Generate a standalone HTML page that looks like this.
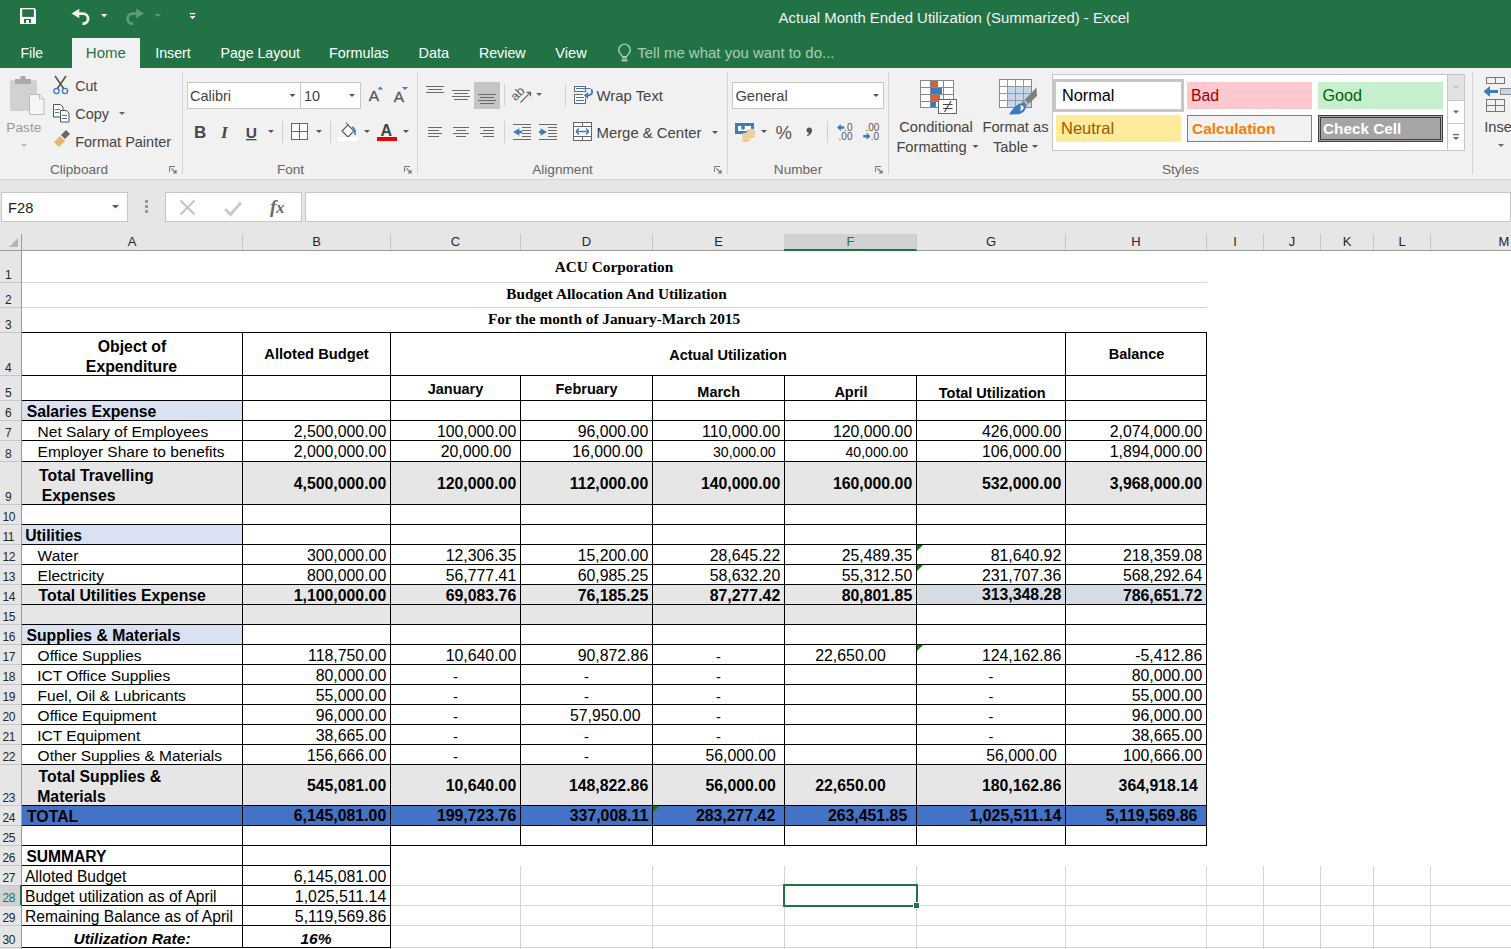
<!DOCTYPE html>
<html><head><meta charset="utf-8">
<style>
*{margin:0;padding:0;box-sizing:border-box}
html,body{width:1511px;height:949px;overflow:hidden;background:#fff;font-family:"Liberation Sans",sans-serif}
.a{position:absolute}
.t{position:absolute;white-space:nowrap}
</style></head><body>
<div class="a" style="left:0px;top:0px;width:1511px;height:68px;background:#217346;"></div><svg class="a" style="left:0;top:0" width="210" height="36">
<path d="M20 8 h14.5 l1.5 1.5 v14.5 h-16 z" fill="#fff"/>
<rect x="22.2" y="9.3" width="11.6" height="7.6" fill="#217346"/>
<rect x="24" y="19" width="7" height="4" fill="#217346"/>
<rect x="26" y="20" width="3" height="3" fill="#fff"/>
<path d="M71.5 13.5 L79.3 8.7 L79.3 18.3 Z" fill="#f2f2f2"/>
<path d="M78 13.6 H83 A5.1 5.1 0 0 1 84 23.7 H82.5" fill="none" stroke="#f2f2f2" stroke-width="2.8"/>
<path d="M101 14 h6.3 l-3.15 3.2 z" fill="#fff"/>
<path d="M144 13.5 L136.2 8.7 L136.2 18.3 Z" fill="#5c9d78"/>
<path d="M137.5 13.6 H132.5 A5.1 5.1 0 0 0 131.5 23.7 H133" fill="none" stroke="#5c9d78" stroke-width="2.8"/>
<path d="M154.7 14 h6.3 l-3.15 3 z" fill="#5c9d78"/>
<rect x="189.8" y="12.9" width="5.4" height="1.4" fill="#fff"/>
<path d="M189.7 15.9 h5.8 l-2.9 3.3 z" fill="#fff"/>
</svg><div class="t" style="left:554px;width:800px;text-align:center;top:9px;font-size:14.93px;line-height:17px;font-weight:normal;font-style:normal;color:#f2f2f2;font-family:'Liberation Sans',sans-serif;">Actual Month Ended Utilization (Summarized) - Excel</div><div class="a" style="left:72px;top:38px;width:68px;height:30px;background:#f1f1f1;"></div><div class="t" style="left:20.5px;top:45px;font-size:14.0px;line-height:16px;font-weight:normal;font-style:normal;color:#fff;font-family:'Liberation Sans',sans-serif;">File</div><div class="t" style="left:85.8px;top:44px;font-size:15.0px;line-height:17px;font-weight:normal;font-style:normal;color:#217346;font-family:'Liberation Sans',sans-serif;">Home</div><div class="t" style="left:155.2px;top:45px;font-size:14.25px;line-height:16px;font-weight:normal;font-style:normal;color:#fff;font-family:'Liberation Sans',sans-serif;">Insert</div><div class="t" style="left:220.5px;top:45px;font-size:14.16px;line-height:16px;font-weight:normal;font-style:normal;color:#fff;font-family:'Liberation Sans',sans-serif;">Page Layout</div><div class="t" style="left:329px;top:45px;font-size:14.35px;line-height:16px;font-weight:normal;font-style:normal;color:#fff;font-family:'Liberation Sans',sans-serif;">Formulas</div><div class="t" style="left:418.5px;top:45px;font-size:14.5px;line-height:16px;font-weight:normal;font-style:normal;color:#fff;font-family:'Liberation Sans',sans-serif;">Data</div><div class="t" style="left:478.9px;top:45px;font-size:14.25px;line-height:16px;font-weight:normal;font-style:normal;color:#fff;font-family:'Liberation Sans',sans-serif;">Review</div><div class="t" style="left:555.3px;top:45px;font-size:14.6px;line-height:16px;font-weight:normal;font-style:normal;color:#fff;font-family:'Liberation Sans',sans-serif;">View</div><svg class="a" style="left:615px;top:42px" width="20" height="22">
<path d="M4.7 10.8 A5.6 5.6 0 1 1 14.3 10.8 L11.3 14.8 H7.7 Z" fill="none" stroke="#a9ccb7" stroke-width="1.4" stroke-linejoin="round"/>
<rect x="7.2" y="14.8" width="4.6" height="1.6" fill="#a9ccb7"/>
<rect x="6.6" y="17.2" width="5.8" height="2.2" fill="#a9ccb7"/>
</svg><div class="t" style="left:637.3px;top:44px;font-size:14.98px;line-height:17px;font-weight:normal;font-style:normal;color:#a9ccb7;font-family:'Liberation Sans',sans-serif;">Tell me what you want to do...</div><div class="a" style="left:0px;top:68px;width:1511px;height:111px;background:#f1f1f1;"></div><div class="a" style="left:0px;top:179px;width:1511px;height:1px;background:#d5d5d5;"></div><div class="a" style="left:182px;top:72px;width:1px;height:102px;background:#d4d4d4;"></div><div class="a" style="left:417px;top:72px;width:1px;height:102px;background:#d4d4d4;"></div><div class="a" style="left:727px;top:72px;width:1px;height:102px;background:#d4d4d4;"></div><div class="a" style="left:888px;top:72px;width:1px;height:102px;background:#d4d4d4;"></div><div class="a" style="left:1472px;top:72px;width:1px;height:102px;background:#d4d4d4;"></div><div class="t" style="left:-321px;width:800px;text-align:center;top:162px;font-size:13.6px;line-height:15px;font-weight:normal;font-style:normal;color:#666;font-family:'Liberation Sans',sans-serif;">Clipboard</div><div class="t" style="left:-109.5px;width:800px;text-align:center;top:162px;font-size:13.6px;line-height:15px;font-weight:normal;font-style:normal;color:#666;font-family:'Liberation Sans',sans-serif;">Font</div><div class="t" style="left:162.5px;width:800px;text-align:center;top:162px;font-size:13.6px;line-height:15px;font-weight:normal;font-style:normal;color:#666;font-family:'Liberation Sans',sans-serif;">Alignment</div><div class="t" style="left:398px;width:800px;text-align:center;top:162px;font-size:13.6px;line-height:15px;font-weight:normal;font-style:normal;color:#666;font-family:'Liberation Sans',sans-serif;">Number</div><div class="t" style="left:780.5px;width:800px;text-align:center;top:162px;font-size:13.6px;line-height:15px;font-weight:normal;font-style:normal;color:#666;font-family:'Liberation Sans',sans-serif;">Styles</div><svg class="a" style="left:169px;top:166px" width="8" height="8">
<path d="M0.5 6 V0.5 H6" fill="none" stroke="#777" stroke-width="1"/>
<path d="M2.5 2.5 L7 7 M7 4 V7 H4" fill="none" stroke="#777" stroke-width="1.2"/>
</svg><svg class="a" style="left:404px;top:166px" width="8" height="8">
<path d="M0.5 6 V0.5 H6" fill="none" stroke="#777" stroke-width="1"/>
<path d="M2.5 2.5 L7 7 M7 4 V7 H4" fill="none" stroke="#777" stroke-width="1.2"/>
</svg><svg class="a" style="left:714px;top:166px" width="8" height="8">
<path d="M0.5 6 V0.5 H6" fill="none" stroke="#777" stroke-width="1"/>
<path d="M2.5 2.5 L7 7 M7 4 V7 H4" fill="none" stroke="#777" stroke-width="1.2"/>
</svg><svg class="a" style="left:875px;top:166px" width="8" height="8">
<path d="M0.5 6 V0.5 H6" fill="none" stroke="#777" stroke-width="1"/>
<path d="M2.5 2.5 L7 7 M7 4 V7 H4" fill="none" stroke="#777" stroke-width="1.2"/>
</svg><svg class="a" style="left:0;top:70px" width="180" height="100">
<rect x="10" y="10" width="27" height="31" rx="1.5" fill="#d2d0d2"/>
<rect x="15" y="9" width="16" height="5" fill="#a9a9a9"/>
<rect x="20.5" y="6" width="5" height="4" fill="#a9a9a9"/>
<path d="M29.5 24.5 h10 l4.5 4.5 v15.5 h-14.5 z" fill="#f7f4f7" stroke="#bdbbbd" stroke-width="1"/>
<path d="M39.5 24.5 v4.5 h4.5" fill="none" stroke="#bdbbbd" stroke-width="1"/>
<path d="M21 74 h6 l-3 3 z" fill="#bbb"/>
<path d="M55 6 L64 19 M66 6 L57 19" stroke="#555" stroke-width="1.6"/>
<circle cx="56.5" cy="21" r="2.6" fill="none" stroke="#3b7bc1" stroke-width="1.3"/>
<circle cx="65" cy="21" r="2.6" fill="none" stroke="#3b7bc1" stroke-width="1.3"/>
<path d="M53.5 34.5 h7 l2.5 2.5 v10 h-9.5 z" fill="#fff" stroke="#555" stroke-width="1"/>
<path d="M60.5 40.5 h6 l2.5 2.5 v9 h-8.5 z" fill="#fff" stroke="#555" stroke-width="1"/>
<path d="M55 39.5 h5 M55 42.5 h4 M62 45.5 h5 M62 48.5 h5" stroke="#3b7bc1" stroke-width="1"/>
<path d="M54 72 l6 -6 l5 5 l-6 6 z" fill="#e3b86e"/>
<path d="M61 65 l5 -5 l4 4 l-5 5 z" fill="#666"/>
<path d="M119 42 h6 l-3 3 z" fill="#666"/>
</svg><div class="t" style="left:6.3px;top:120px;font-size:13.7px;line-height:15px;font-weight:normal;font-style:normal;color:#9a9a9a;font-family:'Liberation Sans',sans-serif;">Paste</div><div class="t" style="left:75.2px;top:78px;font-size:14.2px;line-height:16px;font-weight:normal;font-style:normal;color:#444444;font-family:'Liberation Sans',sans-serif;">Cut</div><div class="t" style="left:75.2px;top:106px;font-size:14.5px;line-height:16px;font-weight:normal;font-style:normal;color:#444444;font-family:'Liberation Sans',sans-serif;">Copy</div><div class="t" style="left:75.2px;top:134px;font-size:14.5px;line-height:16px;font-weight:normal;font-style:normal;color:#444444;font-family:'Liberation Sans',sans-serif;">Format Painter</div><div class="a" style="left:187px;top:82px;width:114px;height:27px;background:#fff;border:1px solid #c6c6c6"></div><div class="a" style="left:300px;top:82px;width:61px;height:27px;background:#fff;border:1px solid #c6c6c6"></div><div class="t" style="left:190px;top:88px;font-size:14.5px;line-height:16px;font-weight:normal;font-style:normal;color:#444;font-family:'Liberation Sans',sans-serif;">Calibri</div><div class="t" style="left:304px;top:88px;font-size:14.5px;line-height:16px;font-weight:normal;font-style:normal;color:#444;font-family:'Liberation Sans',sans-serif;">10</div><svg class="a" style="left:180px;top:70px" width="240" height="90">
<path d="M109.5 24 h6 l-3 3 z" fill="#555"/>
<path d="M169 24 h6 l-3 3 z" fill="#555"/>
<text x="188.8" y="31.3" font-family="Liberation Sans" font-size="15.5" fill="#555" stroke="#555" stroke-width="0.3">A</text>
<path d="M197.5 19.5 l2.8 -3 l2.8 3 z" fill="#3b7bc1"/>
<text x="213.8" y="32.3" font-family="Liberation Sans" font-size="15.5" fill="#555" stroke="#555" stroke-width="0.3">A</text>
<path d="M222 17 h6 l-3 3 z" fill="#3b7bc1"/>
<text x="14" y="68.2" font-family="Liberation Sans" font-size="17" font-weight="bold" fill="#4a4a4a">B</text>
<text x="41" y="68.2" font-family="Liberation Serif" font-size="17.5" font-weight="bold" font-style="italic" fill="#4a4a4a">I</text>
<text x="65.8" y="67.6" font-family="Liberation Sans" font-size="15.5" font-weight="bold" fill="#4a4a4a">U</text>
<rect x="66" y="69" width="10.5" height="1.3" fill="#4a4a4a"/>
<path d="M88 60 h6 l-3 3 z" fill="#555"/>
<rect x="102" y="51" width="1" height="22" fill="#d0d0d0"/>
<rect x="111.5" y="53.5" width="16" height="16" fill="#fff" stroke="#666" stroke-width="1"/>
<path d="M119.5 53.5 v16 M111.5 61.5 h16" stroke="#666" stroke-width="1"/>
<path d="M136 60 h6 l-3 3 z" fill="#555"/>
<rect x="150" y="51" width="1" height="22" fill="#d0d0d0"/>
<path d="M162 61 l6 -6 l6 6 l-6 6 z" fill="#fff" stroke="#555" stroke-width="1.1"/>
<path d="M168 55 l-2 -2.5" stroke="#555" stroke-width="1.1"/>
<path d="M172 57 q4 2 3 8" fill="none" stroke="#3b7bc1" stroke-width="1.6"/>
<rect x="158" y="67" width="20" height="4" fill="#fff"/>
<path d="M184 60 h6 l-3 3 z" fill="#555"/>
<text x="200.5" y="66" font-family="Liberation Sans" font-size="16" font-weight="bold" fill="#444">A</text>
<rect x="197" y="67" width="20" height="4" fill="#e00"/>
<path d="M223 60 h6 l-3 3 z" fill="#555"/>
</svg><div class="a" style="left:474px;top:82px;width:26px;height:27px;background:#c5c5c5;"></div><svg class="a" style="left:420px;top:70px" width="310" height="80">
<g fill="#6a6a6a"><rect x="6" y="16" width="18" height="1"/><rect x="8" y="19" width="14" height="1"/><rect x="6" y="22" width="18" height="1"/><rect x="32" y="20" width="18" height="1"/><rect x="34" y="23" width="14" height="1"/><rect x="32" y="26" width="18" height="1"/><rect x="34" y="29" width="14" height="1"/><rect x="58" y="24" width="18" height="1"/><rect x="60" y="27" width="14" height="1"/><rect x="58" y="30" width="18" height="1"/><rect x="60" y="33" width="14" height="1"/><rect x="8" y="57" width="14" height="1"/><rect x="33" y="57" width="16" height="1"/><rect x="60" y="57" width="14" height="1"/><rect x="8" y="60" width="11" height="1"/><rect x="36" y="60" width="10" height="1"/><rect x="63" y="60" width="11" height="1"/><rect x="8" y="63" width="14" height="1"/><rect x="33" y="63" width="16" height="1"/><rect x="60" y="63" width="14" height="1"/><rect x="8" y="66" width="11" height="1"/><rect x="36" y="66" width="10" height="1"/><rect x="63" y="66" width="11" height="1"/><rect x="93" y="54" width="18" height="1"/><rect x="93" y="69" width="18" height="1"/><rect x="102" y="57" width="9" height="1"/><rect x="102" y="60" width="9" height="1"/><rect x="102" y="63" width="9" height="1"/><rect x="102" y="66" width="9" height="1"/><rect x="119" y="54" width="18" height="1"/><rect x="119" y="69" width="18" height="1"/><rect x="128" y="57" width="9" height="1"/><rect x="128" y="60" width="9" height="1"/><rect x="128" y="63" width="9" height="1"/><rect x="128" y="66" width="9" height="1"/></g>
<rect x="84" y="14" width="1" height="22" fill="#d0d0d0"/>
<rect x="84" y="51" width="1" height="22" fill="#d0d0d0"/>
<path d="M93 62 L99.4 58.3 L99.4 65.7 Z" fill="#3b7bc1"/><rect x="96" y="60.8" width="6" height="2.4" fill="#3b7bc1"/>
<path d="M127 62 L120.6 58.3 L120.6 65.7 Z" fill="#3b7bc1"/><rect x="119" y="60.8" width="5" height="2.4" fill="#3b7bc1"/>
<text x="0" y="0" font-family="Liberation Sans" font-size="12.5" fill="#606060" transform="translate(95.5 31.5) rotate(-45)">ab</text>
<path d="M100.4 32.6 L110.2 22.6 M106.6 22.3 H110.5 V26.2" fill="none" stroke="#606060" stroke-width="1.3"/>
<path d="M116.2 23 h5.8 l-2.9 3 z" fill="#666"/>
<rect x="145" y="14" width="1" height="22" fill="#d0d0d0"/>
<g fill="none" stroke="#666" stroke-width="1">
<rect x="154.5" y="16.5" width="11" height="5" fill="#fff"/>
<rect x="154.5" y="24.5" width="11" height="9" fill="#fff" stroke="none"/>
<path d="M163 24.5 H154.5 V33.5 H165.5 V28"/>
<rect x="153.5" y="52.5" width="18" height="18" fill="#fff"/>
<path d="M153.5 56.5 h18 M153.5 66.5 h18 M162.5 52.5 v4 M162.5 66.5 v4"/>
</g>
<path d="M156 18.5 h14.5 M156 27.5 h8 M156 30.5 h8" stroke="#3b7bc1" stroke-width="1"/>
<path d="M171.5 19 Q174 25.5 166.5 25.5" fill="none" stroke="#3b7bc1" stroke-width="1.8"/>
<path d="M163.8 25.5 L168 22 L168 29 Z" fill="#3b7bc1"/>
<path d="M156 61.5 h13 M156 61.5 l3 -3 M156 61.5 l3 3 M169 61.5 l-3 -3 M169 61.5 l-3 3" fill="none" stroke="#3b7bc1" stroke-width="1.4"/>
<path d="M292 61 h6 l-3 3 z" fill="#555"/>
</svg><div class="t" style="left:596.5px;top:88px;font-size:14.9px;line-height:16px;font-weight:normal;font-style:normal;color:#444444;font-family:'Liberation Sans',sans-serif;">Wrap Text</div><div class="t" style="left:596.5px;top:125px;font-size:14.88px;line-height:16px;font-weight:normal;font-style:normal;color:#444444;font-family:'Liberation Sans',sans-serif;">Merge &amp; Center</div><div class="a" style="left:732px;top:82px;width:152px;height:27px;background:#fff;border:1px solid #c6c6c6"></div><div class="t" style="left:735.4px;top:88px;font-size:14.7px;line-height:16px;font-weight:normal;font-style:normal;color:#444;font-family:'Liberation Sans',sans-serif;">General</div><svg class="a" style="left:725px;top:70px" width="165" height="80">
<path d="M148 24 h6 l-3 3 z" fill="#555"/>
<rect x="10" y="53" width="19" height="11" fill="#3b7bc1"/>
<path d="M13 56 h13 v5 h-13 z" fill="#fff"/>
<circle cx="18" cy="57.8" r="2" fill="#3b7bc1"/>
<g fill="#e9c07e" stroke="#f1f1f1" stroke-width="0.6">
<ellipse cx="26" cy="60.5" rx="4" ry="1.4"/><ellipse cx="26" cy="62.5" rx="4" ry="1.4"/><ellipse cx="26" cy="64.5" rx="4" ry="1.4"/><ellipse cx="26" cy="66.5" rx="4" ry="1.4"/>
<ellipse cx="21" cy="64.5" rx="4" ry="1.4"/><ellipse cx="21" cy="66.5" rx="4" ry="1.4"/><ellipse cx="21" cy="68.5" rx="4" ry="1.4"/><ellipse cx="21" cy="70.5" rx="4" ry="1.4"/>
</g>
<path d="M36 60 h6 l-3 3 z" fill="#555"/>
<text x="50.5" y="69" font-family="Liberation Sans" font-size="18.5" fill="#555">%</text>
<circle cx="84.3" cy="60.3" r="2.7" fill="#555"/>
<path d="M86.8 60.5 Q86.8 64.5 82.3 66.3 L81.9 65.3 Q84.3 64 84.2 62 Z" fill="#555"/>
<rect x="102" y="51" width="1" height="22" fill="#d0d0d0"/>
<text x="119.3" y="60.8" font-family="Liberation Sans" font-size="10" fill="#555">.0</text>
<text x="113.6" y="69.8" font-family="Liberation Sans" font-size="10" fill="#555">.00</text>
<path d="M112 57.5 l3.8 -3.6 v2.3 h3.5 v2.6 h-3.5 v2.3 z" fill="#3b7bc1"/>
<text x="140.5" y="60.8" font-family="Liberation Sans" font-size="10" fill="#555">.00</text>
<text x="145.8" y="69.8" font-family="Liberation Sans" font-size="10" fill="#555">.0</text>
<path d="M145.5 66.2 l-3.8 -3.6 v2.3 h-3.5 v2.6 h3.5 v2.3 z" fill="#3b7bc1"/>
</svg><svg class="a" style="left:915px;top:75px" width="130" height="42">
<rect x="5.5" y="5.5" width="33" height="27" fill="#fff" stroke="#888" stroke-width="1"/>
<path d="M5.5 12.5 h33 M5.5 19.5 h33 M5.5 26.5 h33 M15.5 5.5 v27 M28.5 5.5 v27" stroke="#888" stroke-width="1"/>
<rect x="16" y="6" width="7" height="6" fill="#d9603b"/>
<rect x="16" y="13" width="11" height="6" fill="#3b7bc1"/>
<rect x="16" y="20" width="9" height="6" fill="#d9603b"/>
<rect x="16" y="27" width="5" height="5" fill="#3b7bc1"/>
<rect x="23.5" y="24.5" width="18" height="14" fill="#fff" stroke="#666" stroke-width="1"/>
<path d="M28 29.5 h9.5 M28 33.5 h9.5 M36 26 L29.5 37" stroke="#444" stroke-width="1.1" fill="none"/>
<rect x="84.5" y="4.5" width="32" height="28" fill="#fff" stroke="#888" stroke-width="1"/>
<rect x="93" y="12" width="23" height="20" fill="#c3d6ec"/>
<path d="M84.5 11.5 h32 M84.5 18.5 h32 M84.5 25.5 h32 M92.5 4.5 v28 M100.5 4.5 v28 M108.5 4.5 v28" stroke="#999" stroke-width="1"/>
<path d="M121.5 12.5 L122 21 L113.5 29 L109.5 25 Z" fill="#808080"/>
<path d="M108.5 26 L112.5 30 L109.5 33 L105.5 29 Z" fill="#808080"/>
<path d="M94 39.5 Q99 31 105 28.5 Q109.5 28.5 111 32 Q110.5 37 104 39.3 Z" fill="#3b7bc1"/>
<path d="M105.5 30.2 Q108.6 30.5 108.8 33 Q107.5 35.5 105 36 Q106.5 33 105.5 30.2 Z" fill="#fff"/>
</svg><div class="t" style="left:536px;width:800px;text-align:center;top:119px;font-size:14.7px;line-height:16px;font-weight:normal;font-style:normal;color:#444444;font-family:'Liberation Sans',sans-serif;">Conditional</div><div class="t" style="left:531.5px;width:800px;text-align:center;top:139px;font-size:14.7px;line-height:16px;font-weight:normal;font-style:normal;color:#444444;font-family:'Liberation Sans',sans-serif;">Formatting</div><svg class="a" style="left:970px;top:143px" width="70" height="8"><path d="M2.5 2 h6 l-3 3 z" fill="#555"/><path d="M62 2 h6 l-3 3 z" fill="#555"/></svg><div class="t" style="left:615.5px;width:800px;text-align:center;top:119px;font-size:14.7px;line-height:16px;font-weight:normal;font-style:normal;color:#444444;font-family:'Liberation Sans',sans-serif;">Format as</div><div class="t" style="left:610.6px;width:800px;text-align:center;top:139px;font-size:14.7px;line-height:16px;font-weight:normal;font-style:normal;color:#444444;font-family:'Liberation Sans',sans-serif;">Table</div><div class="a" style="left:1052px;top:74px;width:397px;height:77px;background:#fff;border:1px solid #c6c6c6"></div><div class="a" style="left:1053px;top:79px;width:131px;height:33px;background:#fff;border:3px solid #c6c6c6"></div><div class="t" style="left:1062px;top:86px;font-size:16.3px;line-height:18px;font-weight:normal;font-style:normal;color:#000;font-family:'Liberation Sans',sans-serif;">Normal</div><div class="a" style="left:1187px;top:82px;width:125px;height:27px;background:#ffc7ce;"></div><div class="t" style="left:1191px;top:87px;font-size:15.8px;line-height:17px;font-weight:normal;font-style:normal;color:#9c0006;font-family:'Liberation Sans',sans-serif;">Bad</div><div class="a" style="left:1318px;top:82px;width:125px;height:27px;background:#c6efce;"></div><div class="t" style="left:1322.5px;top:86px;font-size:16.2px;line-height:18px;font-weight:normal;font-style:normal;color:#006100;font-family:'Liberation Sans',sans-serif;">Good</div><div class="a" style="left:1056px;top:115px;width:125px;height:27px;background:#ffeb9c;"></div><div class="t" style="left:1061px;top:119px;font-size:16.5px;line-height:18px;font-weight:normal;font-style:normal;color:#9c5700;font-family:'Liberation Sans',sans-serif;">Neutral</div><div class="a" style="left:1187px;top:115px;width:125px;height:27px;background:#f2f2f2;border:1px solid #7f7f7f"></div><div class="t" style="left:1192px;top:120px;font-size:15.5px;line-height:17px;font-weight:bold;font-style:normal;color:#fa7d00;font-family:'Liberation Sans',sans-serif;">Calculation</div><div class="a" style="left:1318px;top:115px;width:125px;height:27px;background:#a5a5a5;border:3px double #3f3f3f"></div><div class="t" style="left:1323px;top:120px;font-size:15.3px;line-height:17px;font-weight:bold;font-style:normal;color:#fff;font-family:'Liberation Sans',sans-serif;">Check Cell</div><div class="a" style="left:1447px;top:74px;width:18px;height:77px;background:#fff;border:1px solid #c6c6c6"></div><div class="a" style="left:1448px;top:75px;width:16px;height:26px;background:#e2e2e2;"></div><div class="a" style="left:1448px;top:100px;width:16px;height:1px;background:#c6c6c6;"></div><div class="a" style="left:1448px;top:123px;width:16px;height:1px;background:#c6c6c6;"></div><svg class="a" style="left:1447px;top:74px" width="18" height="77">
<path d="M6 14 l3 -3 l3 3 z" fill="#c0c0c0"/>
<path d="M6 36.5 h6 l-3 3 z" fill="#666"/>
<rect x="6" y="60" width="6" height="1.2" fill="#666"/>
<path d="M6 63 h6 l-3 3 z" fill="#666"/>
</svg><svg class="a" style="left:1478px;top:70px" width="33" height="80">
<g fill="none" stroke="#777" stroke-width="1">
<rect x="8.5" y="7.5" width="18" height="6"/>
<path d="M17.5 7.5 v6"/>
<rect x="8.5" y="29.5" width="18" height="12"/>
<path d="M17.5 29.5 v12 M8.5 35.5 h18"/>
<rect x="22.5" y="18.5" width="14" height="6" fill="#c3d6ec" stroke="#8a8a8a"/>
</g>
<path d="M5.5 21.5 L12 16 L12 27 Z" fill="#3b7bc1"/>
<rect x="10" y="20" width="10" height="3" fill="#3b7bc1"/>
<path d="M20 74 h6 l-3 3 z" fill="#666"/>
</svg><div class="t" style="left:1484.2px;top:119px;font-size:14.7px;line-height:16px;font-weight:normal;font-style:normal;color:#444444;font-family:'Liberation Sans',sans-serif;">Inse</div><div class="a" style="left:0px;top:180px;width:1511px;height:52px;background:#e6e6e6;"></div><div class="a" style="left:1px;top:192px;width:127px;height:30px;background:#fff;border:1px solid #c6c6c6"></div><div class="t" style="left:8px;top:200px;font-size:14.7px;line-height:16px;font-weight:normal;font-style:normal;color:#222;font-family:'Liberation Sans',sans-serif;">F28</div><svg class="a" style="left:110px;top:204px" width="12" height="8"><path d="M2 1 h7 l-3.5 3.5 z" fill="#555"/></svg><svg class="a" style="left:143px;top:197px" width="8" height="20"><rect x="2" y="3" width="3" height="3" fill="#999"/><rect x="2" y="8" width="3" height="3" fill="#999"/><rect x="2" y="13" width="3" height="3" fill="#999"/></svg><div class="a" style="left:165px;top:192px;width:137px;height:30px;background:#fff;border:1px solid #c6c6c6"></div><svg class="a" style="left:165px;top:192px" width="137" height="30">
<path d="M15.5 8.5 L29.5 22.5 M29.5 8.5 L15.5 22.5" stroke="#c4c4c4" stroke-width="2.1"/>
<path d="M60 17 L65.5 22.5 L76 10.5" fill="none" stroke="#cacaca" stroke-width="3"/>
</svg><div class="t" style="left:270px;top:196px;font-size:19px;line-height:21px;font-weight:bold;font-style:italic;color:#6a6a6a;font-family:'Liberation Serif',serif;">f<span style="font-size:16.5px">x</span></div><div class="a" style="left:305px;top:192px;width:1206px;height:30px;background:#fff;border:1px solid #c6c6c6"></div>
<div class="a" style="left:22px;top:282px;width:1489px;height:1px;background:#d4d4d4;"></div><div class="a" style="left:22px;top:307px;width:1489px;height:1px;background:#d4d4d4;"></div><div class="a" style="left:22px;top:332px;width:1489px;height:1px;background:#d4d4d4;"></div><div class="a" style="left:22px;top:375px;width:1489px;height:1px;background:#d4d4d4;"></div><div class="a" style="left:22px;top:400px;width:1489px;height:1px;background:#d4d4d4;"></div><div class="a" style="left:22px;top:420px;width:1489px;height:1px;background:#d4d4d4;"></div><div class="a" style="left:22px;top:440px;width:1489px;height:1px;background:#d4d4d4;"></div><div class="a" style="left:22px;top:461px;width:1489px;height:1px;background:#d4d4d4;"></div><div class="a" style="left:22px;top:504px;width:1489px;height:1px;background:#d4d4d4;"></div><div class="a" style="left:22px;top:524px;width:1489px;height:1px;background:#d4d4d4;"></div><div class="a" style="left:22px;top:544px;width:1489px;height:1px;background:#d4d4d4;"></div><div class="a" style="left:22px;top:564px;width:1489px;height:1px;background:#d4d4d4;"></div><div class="a" style="left:22px;top:584px;width:1489px;height:1px;background:#d4d4d4;"></div><div class="a" style="left:22px;top:604px;width:1489px;height:1px;background:#d4d4d4;"></div><div class="a" style="left:22px;top:624px;width:1489px;height:1px;background:#d4d4d4;"></div><div class="a" style="left:22px;top:644px;width:1489px;height:1px;background:#d4d4d4;"></div><div class="a" style="left:22px;top:664px;width:1489px;height:1px;background:#d4d4d4;"></div><div class="a" style="left:22px;top:684px;width:1489px;height:1px;background:#d4d4d4;"></div><div class="a" style="left:22px;top:704px;width:1489px;height:1px;background:#d4d4d4;"></div><div class="a" style="left:22px;top:724px;width:1489px;height:1px;background:#d4d4d4;"></div><div class="a" style="left:22px;top:744px;width:1489px;height:1px;background:#d4d4d4;"></div><div class="a" style="left:22px;top:764px;width:1489px;height:1px;background:#d4d4d4;"></div><div class="a" style="left:22px;top:805px;width:1489px;height:1px;background:#d4d4d4;"></div><div class="a" style="left:22px;top:825px;width:1489px;height:1px;background:#d4d4d4;"></div><div class="a" style="left:22px;top:845px;width:1489px;height:1px;background:#d4d4d4;"></div><div class="a" style="left:22px;top:865px;width:1489px;height:1px;background:#d4d4d4;"></div><div class="a" style="left:22px;top:885px;width:1489px;height:1px;background:#d4d4d4;"></div><div class="a" style="left:22px;top:905px;width:1489px;height:1px;background:#d4d4d4;"></div><div class="a" style="left:22px;top:925px;width:1489px;height:1px;background:#d4d4d4;"></div><div class="a" style="left:22px;top:947px;width:1489px;height:1px;background:#d4d4d4;"></div><div class="a" style="left:242px;top:251px;width:1px;height:698px;background:#d4d4d4;"></div><div class="a" style="left:390px;top:251px;width:1px;height:698px;background:#d4d4d4;"></div><div class="a" style="left:520px;top:251px;width:1px;height:698px;background:#d4d4d4;"></div><div class="a" style="left:652px;top:251px;width:1px;height:698px;background:#d4d4d4;"></div><div class="a" style="left:784px;top:251px;width:1px;height:698px;background:#d4d4d4;"></div><div class="a" style="left:916px;top:251px;width:1px;height:698px;background:#d4d4d4;"></div><div class="a" style="left:1065px;top:251px;width:1px;height:698px;background:#d4d4d4;"></div><div class="a" style="left:1206px;top:251px;width:1px;height:698px;background:#d4d4d4;"></div><div class="a" style="left:1263px;top:251px;width:1px;height:698px;background:#d4d4d4;"></div><div class="a" style="left:1320px;top:251px;width:1px;height:698px;background:#d4d4d4;"></div><div class="a" style="left:1373px;top:251px;width:1px;height:698px;background:#d4d4d4;"></div><div class="a" style="left:1430px;top:251px;width:1px;height:698px;background:#d4d4d4;"></div><div class="a" style="left:1207px;top:251px;width:394px;height:615px;background:#fff;"></div><div class="a" style="left:22px;top:251px;width:1185px;height:31px;background:#fff;"></div><div class="a" style="left:22px;top:283px;width:1185px;height:24px;background:#fff;"></div><div class="a" style="left:22px;top:308px;width:1185px;height:24px;background:#fff;"></div><div class="a" style="left:22px;top:333px;width:1185px;height:513px;background:#fff;"></div><div class="a" style="left:391px;top:846px;width:1210px;height:20px;background:#fff;"></div><div class="a" style="left:22px;top:401px;width:221px;height:20px;background:#d9e1f2;"></div><div class="a" style="left:22px;top:525px;width:221px;height:20px;background:#d9e1f2;"></div><div class="a" style="left:22px;top:625px;width:221px;height:20px;background:#d9e1f2;"></div><div class="a" style="left:22px;top:462px;width:1185px;height:43px;background:#e7e6e6;"></div><div class="a" style="left:22px;top:585px;width:895px;height:20px;background:#e7e6e6;"></div><div class="a" style="left:917px;top:585px;width:290px;height:20px;background:#d6dce4;"></div><div class="a" style="left:22px;top:605px;width:895px;height:20px;background:#e7e6e6;"></div><div class="a" style="left:22px;top:765px;width:1185px;height:41px;background:#e7e6e6;"></div><div class="a" style="left:22px;top:806px;width:1185px;height:20px;background:#4472c4;"></div><div class="a" style="left:21px;top:332px;width:1186px;height:1px;background:#000;"></div><div class="a" style="left:21px;top:375px;width:1186px;height:1px;background:#000;"></div><div class="a" style="left:21px;top:400px;width:1186px;height:1px;background:#000;"></div><div class="a" style="left:21px;top:420px;width:1186px;height:1px;background:#000;"></div><div class="a" style="left:21px;top:440px;width:1186px;height:1px;background:#000;"></div><div class="a" style="left:21px;top:461px;width:1186px;height:1px;background:#000;"></div><div class="a" style="left:21px;top:504px;width:1186px;height:1px;background:#000;"></div><div class="a" style="left:21px;top:524px;width:1186px;height:1px;background:#000;"></div><div class="a" style="left:21px;top:544px;width:1186px;height:1px;background:#000;"></div><div class="a" style="left:21px;top:564px;width:1186px;height:1px;background:#000;"></div><div class="a" style="left:21px;top:584px;width:1186px;height:1px;background:#000;"></div><div class="a" style="left:21px;top:604px;width:1186px;height:1px;background:#000;"></div><div class="a" style="left:21px;top:624px;width:1186px;height:1px;background:#000;"></div><div class="a" style="left:21px;top:644px;width:1186px;height:1px;background:#000;"></div><div class="a" style="left:21px;top:664px;width:1186px;height:1px;background:#000;"></div><div class="a" style="left:21px;top:684px;width:1186px;height:1px;background:#000;"></div><div class="a" style="left:21px;top:704px;width:1186px;height:1px;background:#000;"></div><div class="a" style="left:21px;top:724px;width:1186px;height:1px;background:#000;"></div><div class="a" style="left:21px;top:744px;width:1186px;height:1px;background:#000;"></div><div class="a" style="left:21px;top:764px;width:1186px;height:1px;background:#000;"></div><div class="a" style="left:21px;top:805px;width:1186px;height:1px;background:#000;"></div><div class="a" style="left:21px;top:825px;width:1186px;height:1px;background:#000;"></div><div class="a" style="left:21px;top:845px;width:1186px;height:1px;background:#000;"></div><div class="a" style="left:242px;top:332px;width:1px;height:514px;background:#000;"></div><div class="a" style="left:390px;top:332px;width:1px;height:514px;background:#000;"></div><div class="a" style="left:520px;top:375px;width:1px;height:471px;background:#000;"></div><div class="a" style="left:652px;top:375px;width:1px;height:471px;background:#000;"></div><div class="a" style="left:784px;top:375px;width:1px;height:471px;background:#000;"></div><div class="a" style="left:916px;top:375px;width:1px;height:471px;background:#000;"></div><div class="a" style="left:1065px;top:332px;width:1px;height:514px;background:#000;"></div><div class="a" style="left:1206px;top:332px;width:1px;height:514px;background:#000;"></div><div class="a" style="left:21px;top:332px;width:1px;height:514px;background:#000;"></div><div class="a" style="left:21px;top:865px;width:370px;height:1px;background:#000;"></div><div class="a" style="left:21px;top:885px;width:370px;height:1px;background:#000;"></div><div class="a" style="left:21px;top:905px;width:370px;height:1px;background:#000;"></div><div class="a" style="left:21px;top:925px;width:370px;height:1px;background:#000;"></div><div class="a" style="left:21px;top:947px;width:370px;height:1px;background:#000;"></div><div class="a" style="left:242px;top:845px;width:1px;height:103px;background:#000;"></div><div class="a" style="left:390px;top:845px;width:1px;height:103px;background:#000;"></div><div class="t" style="left:214px;width:800px;text-align:center;top:258px;font-size:15.3px;line-height:17px;font-weight:bold;font-style:normal;color:#000;font-family:'Liberation Serif',serif;">ACU Corporation</div><div class="t" style="left:216.5px;width:800px;text-align:center;top:285px;font-size:15.3px;line-height:17px;font-weight:bold;font-style:normal;color:#000;font-family:'Liberation Serif',serif;">Budget Allocation And Utilization</div><div class="t" style="left:214px;width:800px;text-align:center;top:310px;font-size:15.3px;line-height:17px;font-weight:bold;font-style:normal;color:#000;font-family:'Liberation Serif',serif;">For the month of January-March 2015</div><div class="t" style="left:-268px;width:800px;text-align:center;top:338px;font-size:15.8px;line-height:17px;font-weight:bold;font-style:normal;color:#000;font-family:'Liberation Sans',sans-serif;">Object of</div><div class="t" style="left:-268.5px;width:800px;text-align:center;top:358px;font-size:15.8px;line-height:17px;font-weight:bold;font-style:normal;color:#000;font-family:'Liberation Sans',sans-serif;">Expenditure</div><div class="t" style="left:-83.5px;width:800px;text-align:center;top:346px;font-size:14.7px;line-height:16px;font-weight:bold;font-style:normal;color:#000;font-family:'Liberation Sans',sans-serif;">Alloted Budget</div><div class="t" style="left:328px;width:800px;text-align:center;top:347px;font-size:14.5px;line-height:16px;font-weight:bold;font-style:normal;color:#000;font-family:'Liberation Sans',sans-serif;">Actual Utilization</div><div class="t" style="left:736.5px;width:800px;text-align:center;top:346px;font-size:14.5px;line-height:16px;font-weight:bold;font-style:normal;color:#000;font-family:'Liberation Sans',sans-serif;">Balance</div><div class="t" style="left:55.5px;width:800px;text-align:center;top:381px;font-size:14.5px;line-height:16px;font-weight:bold;font-style:normal;color:#000;font-family:'Liberation Sans',sans-serif;">January</div><div class="t" style="left:186.5px;width:800px;text-align:center;top:381px;font-size:14.5px;line-height:16px;font-weight:bold;font-style:normal;color:#000;font-family:'Liberation Sans',sans-serif;">February</div><div class="t" style="left:318.70000000000005px;width:800px;text-align:center;top:384px;font-size:14.5px;line-height:16px;font-weight:bold;font-style:normal;color:#000;font-family:'Liberation Sans',sans-serif;">March</div><div class="t" style="left:450.9px;width:800px;text-align:center;top:384px;font-size:14.5px;line-height:16px;font-weight:bold;font-style:normal;color:#000;font-family:'Liberation Sans',sans-serif;">April</div><div class="t" style="left:592.2px;width:800px;text-align:center;top:385px;font-size:14.5px;line-height:16px;font-weight:bold;font-style:normal;color:#000;font-family:'Liberation Sans',sans-serif;">Total Utilization</div><div class="t" style="left:26.7px;top:403px;font-size:15.75px;line-height:17px;font-weight:bold;font-style:normal;color:#000;font-family:'Liberation Sans',sans-serif;">Salaries Expense</div><div class="t" style="left:37.6px;top:423px;font-size:15.5px;line-height:17px;font-weight:normal;font-style:normal;color:#000;font-family:'Liberation Sans',sans-serif;">Net Salary of Employees</div><div class="t" style="left:37.6px;top:443px;font-size:15.5px;line-height:17px;font-weight:normal;font-style:normal;color:#000;font-family:'Liberation Sans',sans-serif;">Employer Share to benefits</div><div class="t" style="left:39px;top:467px;font-size:15.8px;line-height:17px;font-weight:bold;font-style:normal;color:#000;font-family:'Liberation Sans',sans-serif;">Total Travelling</div><div class="t" style="left:41.7px;top:487px;font-size:15.8px;line-height:17px;font-weight:bold;font-style:normal;color:#000;font-family:'Liberation Sans',sans-serif;">Expenses</div><div class="t" style="left:25.2px;top:527px;font-size:15.75px;line-height:17px;font-weight:bold;font-style:normal;color:#000;font-family:'Liberation Sans',sans-serif;">Utilities</div><div class="t" style="left:37.6px;top:547px;font-size:15.5px;line-height:17px;font-weight:normal;font-style:normal;color:#000;font-family:'Liberation Sans',sans-serif;">Water</div><div class="t" style="left:37.6px;top:567px;font-size:15.5px;line-height:17px;font-weight:normal;font-style:normal;color:#000;font-family:'Liberation Sans',sans-serif;">Electricity</div><div class="t" style="left:38.5px;top:587px;font-size:15.8px;line-height:17px;font-weight:bold;font-style:normal;color:#000;font-family:'Liberation Sans',sans-serif;">Total Utilities Expense</div><div class="t" style="left:26.4px;top:627px;font-size:15.75px;line-height:17px;font-weight:bold;font-style:normal;color:#000;font-family:'Liberation Sans',sans-serif;">Supplies &amp; Materials</div><div class="t" style="left:37.6px;top:647px;font-size:15.5px;line-height:17px;font-weight:normal;font-style:normal;color:#000;font-family:'Liberation Sans',sans-serif;">Office Supplies</div><div class="t" style="left:37.2px;top:667px;font-size:15.5px;line-height:17px;font-weight:normal;font-style:normal;color:#000;font-family:'Liberation Sans',sans-serif;">ICT Office Supplies</div><div class="t" style="left:37.6px;top:687px;font-size:15.5px;line-height:17px;font-weight:normal;font-style:normal;color:#000;font-family:'Liberation Sans',sans-serif;">Fuel, Oil &amp; Lubricants</div><div class="t" style="left:37.6px;top:707px;font-size:15.5px;line-height:17px;font-weight:normal;font-style:normal;color:#000;font-family:'Liberation Sans',sans-serif;">Office Equipment</div><div class="t" style="left:37.2px;top:727px;font-size:15.5px;line-height:17px;font-weight:normal;font-style:normal;color:#000;font-family:'Liberation Sans',sans-serif;">ICT Equipment</div><div class="t" style="left:37.6px;top:747px;font-size:15.5px;line-height:17px;font-weight:normal;font-style:normal;color:#000;font-family:'Liberation Sans',sans-serif;">Other Supplies &amp; Materials</div><div class="t" style="left:38.5px;top:768px;font-size:15.8px;line-height:17px;font-weight:bold;font-style:normal;color:#000;font-family:'Liberation Sans',sans-serif;">Total Supplies &amp;</div><div class="t" style="left:37.2px;top:788px;font-size:15.8px;line-height:17px;font-weight:bold;font-style:normal;color:#000;font-family:'Liberation Sans',sans-serif;">Materials</div><div class="t" style="left:27px;top:808px;font-size:15.8px;line-height:17px;font-weight:bold;font-style:normal;color:#000;font-family:'Liberation Sans',sans-serif;">TOTAL</div><div class="t" style="left:26.4px;top:848px;font-size:15.6px;line-height:17px;font-weight:bold;font-style:normal;color:#000;font-family:'Liberation Sans',sans-serif;">SUMMARY</div><div class="t" style="left:24.9px;top:868px;font-size:15.6px;line-height:17px;font-weight:normal;font-style:normal;color:#000;font-family:'Liberation Sans',sans-serif;">Alloted Budget</div><div class="t" style="left:25px;top:888px;font-size:15.6px;line-height:17px;font-weight:normal;font-style:normal;color:#000;font-family:'Liberation Sans',sans-serif;">Budget utilization as of April</div><div class="t" style="left:25px;top:908px;font-size:15.6px;line-height:17px;font-weight:normal;font-style:normal;color:#000;font-family:'Liberation Sans',sans-serif;">Remaining Balance as of April</div><div class="t" style="left:-268px;width:800px;text-align:center;top:930px;font-size:15.5px;line-height:17px;font-weight:bold;font-style:italic;color:#000;font-family:'Liberation Sans',sans-serif;">Utilization Rate:</div><div class="t" style="left:-84px;width:800px;text-align:center;top:930px;font-size:15.5px;line-height:17px;font-weight:bold;font-style:italic;color:#000;font-family:'Liberation Sans',sans-serif;">16%</div><div class="t" style="right:1124.8px;top:423px;font-size:15.85px;line-height:17px;font-weight:normal;font-style:normal;color:#000;font-family:'Liberation Sans',sans-serif;">2,500,000.00</div><div class="t" style="right:994.8px;top:423px;font-size:15.85px;line-height:17px;font-weight:normal;font-style:normal;color:#000;font-family:'Liberation Sans',sans-serif;">100,000.00</div><div class="t" style="right:862.8px;top:423px;font-size:15.85px;line-height:17px;font-weight:normal;font-style:normal;color:#000;font-family:'Liberation Sans',sans-serif;">96,000.00</div><div class="t" style="right:730.8px;top:423px;font-size:15.85px;line-height:17px;font-weight:normal;font-style:normal;color:#000;font-family:'Liberation Sans',sans-serif;">110,000.00</div><div class="t" style="right:598.8px;top:423px;font-size:15.85px;line-height:17px;font-weight:normal;font-style:normal;color:#000;font-family:'Liberation Sans',sans-serif;">120,000.00</div><div class="t" style="right:449.79999999999995px;top:423px;font-size:15.85px;line-height:17px;font-weight:normal;font-style:normal;color:#000;font-family:'Liberation Sans',sans-serif;">426,000.00</div><div class="t" style="right:308.79999999999995px;top:423px;font-size:15.85px;line-height:17px;font-weight:normal;font-style:normal;color:#000;font-family:'Liberation Sans',sans-serif;">2,074,000.00</div><div class="t" style="right:1124.8px;top:443px;font-size:15.85px;line-height:17px;font-weight:normal;font-style:normal;color:#000;font-family:'Liberation Sans',sans-serif;">2,000,000.00</div><div class="t" style="right:999.8px;top:443px;font-size:15.85px;line-height:17px;font-weight:normal;font-style:normal;color:#000;font-family:'Liberation Sans',sans-serif;">20,000.00</div><div class="t" style="right:868.3px;top:443px;font-size:15.85px;line-height:17px;font-weight:normal;font-style:normal;color:#000;font-family:'Liberation Sans',sans-serif;">16,000.00</div><div class="t" style="right:735.3px;top:444px;font-size:14.1px;line-height:16px;font-weight:normal;font-style:normal;color:#000;font-family:'Liberation Sans',sans-serif;">30,000.00</div><div class="t" style="right:602.8px;top:444px;font-size:14.1px;line-height:16px;font-weight:normal;font-style:normal;color:#000;font-family:'Liberation Sans',sans-serif;">40,000.00</div><div class="t" style="right:449.79999999999995px;top:443px;font-size:15.85px;line-height:17px;font-weight:normal;font-style:normal;color:#000;font-family:'Liberation Sans',sans-serif;">106,000.00</div><div class="t" style="right:308.79999999999995px;top:443px;font-size:15.85px;line-height:17px;font-weight:normal;font-style:normal;color:#000;font-family:'Liberation Sans',sans-serif;">1,894,000.00</div><div class="t" style="right:1124.8px;top:475px;font-size:15.85px;line-height:17px;font-weight:bold;font-style:normal;color:#000;font-family:'Liberation Sans',sans-serif;">4,500,000.00</div><div class="t" style="right:994.8px;top:475px;font-size:15.85px;line-height:17px;font-weight:bold;font-style:normal;color:#000;font-family:'Liberation Sans',sans-serif;">120,000.00</div><div class="t" style="right:862.8px;top:475px;font-size:15.85px;line-height:17px;font-weight:bold;font-style:normal;color:#000;font-family:'Liberation Sans',sans-serif;">112,000.00</div><div class="t" style="right:730.8px;top:475px;font-size:15.85px;line-height:17px;font-weight:bold;font-style:normal;color:#000;font-family:'Liberation Sans',sans-serif;">140,000.00</div><div class="t" style="right:598.8px;top:475px;font-size:15.85px;line-height:17px;font-weight:bold;font-style:normal;color:#000;font-family:'Liberation Sans',sans-serif;">160,000.00</div><div class="t" style="right:449.79999999999995px;top:475px;font-size:15.85px;line-height:17px;font-weight:bold;font-style:normal;color:#000;font-family:'Liberation Sans',sans-serif;">532,000.00</div><div class="t" style="right:308.79999999999995px;top:475px;font-size:15.85px;line-height:17px;font-weight:bold;font-style:normal;color:#000;font-family:'Liberation Sans',sans-serif;">3,968,000.00</div><div class="t" style="right:1124.8px;top:547px;font-size:15.85px;line-height:17px;font-weight:normal;font-style:normal;color:#000;font-family:'Liberation Sans',sans-serif;">300,000.00</div><div class="t" style="right:994.8px;top:547px;font-size:15.85px;line-height:17px;font-weight:normal;font-style:normal;color:#000;font-family:'Liberation Sans',sans-serif;">12,306.35</div><div class="t" style="right:862.8px;top:547px;font-size:15.85px;line-height:17px;font-weight:normal;font-style:normal;color:#000;font-family:'Liberation Sans',sans-serif;">15,200.00</div><div class="t" style="right:730.8px;top:547px;font-size:15.85px;line-height:17px;font-weight:normal;font-style:normal;color:#000;font-family:'Liberation Sans',sans-serif;">28,645.22</div><div class="t" style="right:598.8px;top:547px;font-size:15.85px;line-height:17px;font-weight:normal;font-style:normal;color:#000;font-family:'Liberation Sans',sans-serif;">25,489.35</div><div class="t" style="right:449.79999999999995px;top:547px;font-size:15.85px;line-height:17px;font-weight:normal;font-style:normal;color:#000;font-family:'Liberation Sans',sans-serif;">81,640.92</div><div class="t" style="right:308.79999999999995px;top:547px;font-size:15.85px;line-height:17px;font-weight:normal;font-style:normal;color:#000;font-family:'Liberation Sans',sans-serif;">218,359.08</div><div class="t" style="right:1124.8px;top:567px;font-size:15.85px;line-height:17px;font-weight:normal;font-style:normal;color:#000;font-family:'Liberation Sans',sans-serif;">800,000.00</div><div class="t" style="right:994.8px;top:567px;font-size:15.85px;line-height:17px;font-weight:normal;font-style:normal;color:#000;font-family:'Liberation Sans',sans-serif;">56,777.41</div><div class="t" style="right:862.8px;top:567px;font-size:15.85px;line-height:17px;font-weight:normal;font-style:normal;color:#000;font-family:'Liberation Sans',sans-serif;">60,985.25</div><div class="t" style="right:730.8px;top:567px;font-size:15.85px;line-height:17px;font-weight:normal;font-style:normal;color:#000;font-family:'Liberation Sans',sans-serif;">58,632.20</div><div class="t" style="right:598.8px;top:567px;font-size:15.85px;line-height:17px;font-weight:normal;font-style:normal;color:#000;font-family:'Liberation Sans',sans-serif;">55,312.50</div><div class="t" style="right:449.79999999999995px;top:567px;font-size:15.85px;line-height:17px;font-weight:normal;font-style:normal;color:#000;font-family:'Liberation Sans',sans-serif;">231,707.36</div><div class="t" style="right:308.79999999999995px;top:567px;font-size:15.85px;line-height:17px;font-weight:normal;font-style:normal;color:#000;font-family:'Liberation Sans',sans-serif;">568,292.64</div><div class="t" style="right:1124.8px;top:587px;font-size:15.85px;line-height:17px;font-weight:bold;font-style:normal;color:#000;font-family:'Liberation Sans',sans-serif;">1,100,000.00</div><div class="t" style="right:994.8px;top:587px;font-size:15.85px;line-height:17px;font-weight:bold;font-style:normal;color:#000;font-family:'Liberation Sans',sans-serif;">69,083.76</div><div class="t" style="right:862.8px;top:587px;font-size:15.85px;line-height:17px;font-weight:bold;font-style:normal;color:#000;font-family:'Liberation Sans',sans-serif;">76,185.25</div><div class="t" style="right:730.8px;top:587px;font-size:15.85px;line-height:17px;font-weight:bold;font-style:normal;color:#000;font-family:'Liberation Sans',sans-serif;">87,277.42</div><div class="t" style="right:598.8px;top:587px;font-size:15.85px;line-height:17px;font-weight:bold;font-style:normal;color:#000;font-family:'Liberation Sans',sans-serif;">80,801.85</div><div class="t" style="right:449.79999999999995px;top:586px;font-size:15.85px;line-height:17px;font-weight:bold;font-style:normal;color:#000;font-family:'Liberation Sans',sans-serif;">313,348.28</div><div class="t" style="right:308.79999999999995px;top:587px;font-size:15.85px;line-height:17px;font-weight:bold;font-style:normal;color:#000;font-family:'Liberation Sans',sans-serif;">786,651.72</div><div class="t" style="right:1124.8px;top:647px;font-size:15.85px;line-height:17px;font-weight:normal;font-style:normal;color:#000;font-family:'Liberation Sans',sans-serif;">118,750.00</div><div class="t" style="right:994.8px;top:647px;font-size:15.85px;line-height:17px;font-weight:normal;font-style:normal;color:#000;font-family:'Liberation Sans',sans-serif;">10,640.00</div><div class="t" style="right:862.8px;top:647px;font-size:15.85px;line-height:17px;font-weight:normal;font-style:normal;color:#000;font-family:'Liberation Sans',sans-serif;">90,872.86</div><div class="t" style="left:318.5px;width:800px;text-align:center;top:649px;font-size:14.5px;line-height:16px;font-weight:normal;font-style:normal;color:#000;font-family:'Liberation Sans',sans-serif;">-</div><div class="t" style="left:450.5px;width:800px;text-align:center;top:647px;font-size:15.85px;line-height:17px;font-weight:normal;font-style:normal;color:#000;font-family:'Liberation Sans',sans-serif;">22,650.00</div><div class="t" style="right:449.79999999999995px;top:647px;font-size:15.85px;line-height:17px;font-weight:normal;font-style:normal;color:#000;font-family:'Liberation Sans',sans-serif;">124,162.86</div><div class="t" style="right:308.79999999999995px;top:647px;font-size:15.85px;line-height:17px;font-weight:normal;font-style:normal;color:#000;font-family:'Liberation Sans',sans-serif;">-5,412.86</div><div class="t" style="right:1124.8px;top:667px;font-size:15.85px;line-height:17px;font-weight:normal;font-style:normal;color:#000;font-family:'Liberation Sans',sans-serif;">80,000.00</div><div class="t" style="left:55.5px;width:800px;text-align:center;top:669px;font-size:14.5px;line-height:16px;font-weight:normal;font-style:normal;color:#000;font-family:'Liberation Sans',sans-serif;">-</div><div class="t" style="left:186.5px;width:800px;text-align:center;top:669px;font-size:14.5px;line-height:16px;font-weight:normal;font-style:normal;color:#000;font-family:'Liberation Sans',sans-serif;">-</div><div class="t" style="left:318.5px;width:800px;text-align:center;top:669px;font-size:14.5px;line-height:16px;font-weight:normal;font-style:normal;color:#000;font-family:'Liberation Sans',sans-serif;">-</div><div class="t" style="left:591.0px;width:800px;text-align:center;top:669px;font-size:14.5px;line-height:16px;font-weight:normal;font-style:normal;color:#000;font-family:'Liberation Sans',sans-serif;">-</div><div class="t" style="right:308.79999999999995px;top:667px;font-size:15.85px;line-height:17px;font-weight:normal;font-style:normal;color:#000;font-family:'Liberation Sans',sans-serif;">80,000.00</div><div class="t" style="right:1124.8px;top:687px;font-size:15.85px;line-height:17px;font-weight:normal;font-style:normal;color:#000;font-family:'Liberation Sans',sans-serif;">55,000.00</div><div class="t" style="left:55.5px;width:800px;text-align:center;top:689px;font-size:14.5px;line-height:16px;font-weight:normal;font-style:normal;color:#000;font-family:'Liberation Sans',sans-serif;">-</div><div class="t" style="left:186.5px;width:800px;text-align:center;top:689px;font-size:14.5px;line-height:16px;font-weight:normal;font-style:normal;color:#000;font-family:'Liberation Sans',sans-serif;">-</div><div class="t" style="left:318.5px;width:800px;text-align:center;top:689px;font-size:14.5px;line-height:16px;font-weight:normal;font-style:normal;color:#000;font-family:'Liberation Sans',sans-serif;">-</div><div class="t" style="left:591.0px;width:800px;text-align:center;top:689px;font-size:14.5px;line-height:16px;font-weight:normal;font-style:normal;color:#000;font-family:'Liberation Sans',sans-serif;">-</div><div class="t" style="right:308.79999999999995px;top:687px;font-size:15.85px;line-height:17px;font-weight:normal;font-style:normal;color:#000;font-family:'Liberation Sans',sans-serif;">55,000.00</div><div class="t" style="right:1124.8px;top:707px;font-size:15.85px;line-height:17px;font-weight:normal;font-style:normal;color:#000;font-family:'Liberation Sans',sans-serif;">96,000.00</div><div class="t" style="left:55.5px;width:800px;text-align:center;top:709px;font-size:14.5px;line-height:16px;font-weight:normal;font-style:normal;color:#000;font-family:'Liberation Sans',sans-serif;">-</div><div class="t" style="right:870.5px;top:707px;font-size:15.85px;line-height:17px;font-weight:normal;font-style:normal;color:#000;font-family:'Liberation Sans',sans-serif;">57,950.00</div><div class="t" style="left:318.5px;width:800px;text-align:center;top:709px;font-size:14.5px;line-height:16px;font-weight:normal;font-style:normal;color:#000;font-family:'Liberation Sans',sans-serif;">-</div><div class="t" style="left:591.0px;width:800px;text-align:center;top:709px;font-size:14.5px;line-height:16px;font-weight:normal;font-style:normal;color:#000;font-family:'Liberation Sans',sans-serif;">-</div><div class="t" style="right:308.79999999999995px;top:707px;font-size:15.85px;line-height:17px;font-weight:normal;font-style:normal;color:#000;font-family:'Liberation Sans',sans-serif;">96,000.00</div><div class="t" style="right:1124.8px;top:727px;font-size:15.85px;line-height:17px;font-weight:normal;font-style:normal;color:#000;font-family:'Liberation Sans',sans-serif;">38,665.00</div><div class="t" style="left:55.5px;width:800px;text-align:center;top:729px;font-size:14.5px;line-height:16px;font-weight:normal;font-style:normal;color:#000;font-family:'Liberation Sans',sans-serif;">-</div><div class="t" style="left:186.5px;width:800px;text-align:center;top:729px;font-size:14.5px;line-height:16px;font-weight:normal;font-style:normal;color:#000;font-family:'Liberation Sans',sans-serif;">-</div><div class="t" style="left:318.5px;width:800px;text-align:center;top:729px;font-size:14.5px;line-height:16px;font-weight:normal;font-style:normal;color:#000;font-family:'Liberation Sans',sans-serif;">-</div><div class="t" style="left:591.0px;width:800px;text-align:center;top:729px;font-size:14.5px;line-height:16px;font-weight:normal;font-style:normal;color:#000;font-family:'Liberation Sans',sans-serif;">-</div><div class="t" style="right:308.79999999999995px;top:727px;font-size:15.85px;line-height:17px;font-weight:normal;font-style:normal;color:#000;font-family:'Liberation Sans',sans-serif;">38,665.00</div><div class="t" style="right:1124.8px;top:747px;font-size:15.85px;line-height:17px;font-weight:normal;font-style:normal;color:#000;font-family:'Liberation Sans',sans-serif;">156,666.00</div><div class="t" style="left:55.5px;width:800px;text-align:center;top:749px;font-size:14.5px;line-height:16px;font-weight:normal;font-style:normal;color:#000;font-family:'Liberation Sans',sans-serif;">-</div><div class="t" style="left:186.5px;width:800px;text-align:center;top:749px;font-size:14.5px;line-height:16px;font-weight:normal;font-style:normal;color:#000;font-family:'Liberation Sans',sans-serif;">-</div><div class="t" style="right:735.0999999999999px;top:747px;font-size:15.85px;line-height:17px;font-weight:normal;font-style:normal;color:#000;font-family:'Liberation Sans',sans-serif;">56,000.00</div><div class="t" style="right:454.29999999999995px;top:747px;font-size:15.85px;line-height:17px;font-weight:normal;font-style:normal;color:#000;font-family:'Liberation Sans',sans-serif;">56,000.00</div><div class="t" style="right:308.79999999999995px;top:747px;font-size:15.85px;line-height:17px;font-weight:normal;font-style:normal;color:#000;font-family:'Liberation Sans',sans-serif;">100,666.00</div><div class="t" style="right:1124.8px;top:777px;font-size:15.85px;line-height:17px;font-weight:bold;font-style:normal;color:#000;font-family:'Liberation Sans',sans-serif;">545,081.00</div><div class="t" style="right:994.8px;top:777px;font-size:15.85px;line-height:17px;font-weight:bold;font-style:normal;color:#000;font-family:'Liberation Sans',sans-serif;">10,640.00</div><div class="t" style="right:862.8px;top:777px;font-size:15.85px;line-height:17px;font-weight:bold;font-style:normal;color:#000;font-family:'Liberation Sans',sans-serif;">148,822.86</div><div class="t" style="right:735.0999999999999px;top:777px;font-size:15.85px;line-height:17px;font-weight:bold;font-style:normal;color:#000;font-family:'Liberation Sans',sans-serif;">56,000.00</div><div class="t" style="left:450.5px;width:800px;text-align:center;top:777px;font-size:15.85px;line-height:17px;font-weight:bold;font-style:normal;color:#000;font-family:'Liberation Sans',sans-serif;">22,650.00</div><div class="t" style="right:449.79999999999995px;top:777px;font-size:15.85px;line-height:17px;font-weight:bold;font-style:normal;color:#000;font-family:'Liberation Sans',sans-serif;">180,162.86</div><div class="t" style="right:313.0999999999999px;top:777px;font-size:15.85px;line-height:17px;font-weight:bold;font-style:normal;color:#000;font-family:'Liberation Sans',sans-serif;">364,918.14</div><div class="t" style="right:1124.8px;top:807px;font-size:15.85px;line-height:17px;font-weight:bold;font-style:normal;color:#000;font-family:'Liberation Sans',sans-serif;">6,145,081.00</div><div class="t" style="right:994.8px;top:807px;font-size:15.85px;line-height:17px;font-weight:bold;font-style:normal;color:#000;font-family:'Liberation Sans',sans-serif;">199,723.76</div><div class="t" style="right:862.8px;top:807px;font-size:15.85px;line-height:17px;font-weight:bold;font-style:normal;color:#000;font-family:'Liberation Sans',sans-serif;">337,008.11</div><div class="t" style="right:735.8px;top:807px;font-size:15.85px;line-height:17px;font-weight:bold;font-style:normal;color:#000;font-family:'Liberation Sans',sans-serif;">283,277.42</div><div class="t" style="right:603.8px;top:807px;font-size:15.85px;line-height:17px;font-weight:bold;font-style:normal;color:#000;font-family:'Liberation Sans',sans-serif;">263,451.85</div><div class="t" style="right:449.79999999999995px;top:807px;font-size:15.85px;line-height:17px;font-weight:bold;font-style:normal;color:#000;font-family:'Liberation Sans',sans-serif;">1,025,511.14</div><div class="t" style="right:313.5999999999999px;top:807px;font-size:15.85px;line-height:17px;font-weight:bold;font-style:normal;color:#000;font-family:'Liberation Sans',sans-serif;">5,119,569.86</div><div class="t" style="right:1124.8px;top:868px;font-size:15.85px;line-height:17px;font-weight:normal;font-style:normal;color:#000;font-family:'Liberation Sans',sans-serif;">6,145,081.00</div><div class="t" style="right:1124.8px;top:888px;font-size:15.85px;line-height:17px;font-weight:normal;font-style:normal;color:#000;font-family:'Liberation Sans',sans-serif;">1,025,511.14</div><div class="t" style="right:1124.8px;top:908px;font-size:15.85px;line-height:17px;font-weight:normal;font-style:normal;color:#000;font-family:'Liberation Sans',sans-serif;">5,119,569.86</div><div class="a" style="left:917px;top:545px;width:0;height:0;border-top:6px solid #008000;border-right:6px solid transparent"></div><div class="a" style="left:917px;top:565px;width:0;height:0;border-top:6px solid #008000;border-right:6px solid transparent"></div><div class="a" style="left:917px;top:645px;width:0;height:0;border-top:6px solid #008000;border-right:6px solid transparent"></div><div class="a" style="left:653px;top:806px;width:0;height:0;border-top:6px solid #008000;border-right:6px solid transparent"></div><div class="a" style="left:783px;top:884px;width:135px;height:23px;border:2px solid #217346"></div><div class="a" style="left:913px;top:902px;width:7px;height:7px;background:#217346;border:1px solid #fff"></div>
<div class="a" style="left:0px;top:232px;width:1511px;height:18px;background:#e6e6e6;"></div><div class="a" style="left:0px;top:250px;width:1511px;height:1px;background:#9b9b9b;"></div><div class="a" style="left:0px;top:251px;width:21px;height:698px;background:#e6e6e6;"></div><div class="a" style="left:21px;top:234px;width:1px;height:715px;background:#9b9b9b;"></div><svg class="a" style="left:8px;top:238px" width="11" height="10"><path d="M10 0 L10 9 L1 9 Z" fill="#b4b4b4"/></svg><div class="a" style="left:242px;top:234px;width:1px;height:16px;background:#c6c6c6;"></div><div class="t" style="left:-268.0px;width:800px;text-align:center;top:234px;font-size:13px;line-height:15px;font-weight:normal;font-style:normal;color:#262626;font-family:'Liberation Sans',sans-serif;">A</div><div class="a" style="left:390px;top:234px;width:1px;height:16px;background:#c6c6c6;"></div><div class="t" style="left:-83.5px;width:800px;text-align:center;top:234px;font-size:13px;line-height:15px;font-weight:normal;font-style:normal;color:#262626;font-family:'Liberation Sans',sans-serif;">B</div><div class="a" style="left:520px;top:234px;width:1px;height:16px;background:#c6c6c6;"></div><div class="t" style="left:55.5px;width:800px;text-align:center;top:234px;font-size:13px;line-height:15px;font-weight:normal;font-style:normal;color:#262626;font-family:'Liberation Sans',sans-serif;">C</div><div class="a" style="left:652px;top:234px;width:1px;height:16px;background:#c6c6c6;"></div><div class="t" style="left:186.5px;width:800px;text-align:center;top:234px;font-size:13px;line-height:15px;font-weight:normal;font-style:normal;color:#262626;font-family:'Liberation Sans',sans-serif;">D</div><div class="a" style="left:784px;top:234px;width:1px;height:16px;background:#c6c6c6;"></div><div class="t" style="left:318.5px;width:800px;text-align:center;top:234px;font-size:13px;line-height:15px;font-weight:normal;font-style:normal;color:#262626;font-family:'Liberation Sans',sans-serif;">E</div><div class="a" style="left:784px;top:234px;width:133px;height:16px;background:#d2d2d2;"></div><div class="a" style="left:784px;top:249px;width:133px;height:2px;background:#217346;"></div><div class="a" style="left:916px;top:234px;width:1px;height:16px;background:#c6c6c6;"></div><div class="t" style="left:450.5px;width:800px;text-align:center;top:234px;font-size:13px;line-height:15px;font-weight:normal;font-style:normal;color:#217346;font-family:'Liberation Sans',sans-serif;">F</div><div class="a" style="left:1065px;top:234px;width:1px;height:16px;background:#c6c6c6;"></div><div class="t" style="left:591.0px;width:800px;text-align:center;top:234px;font-size:13px;line-height:15px;font-weight:normal;font-style:normal;color:#262626;font-family:'Liberation Sans',sans-serif;">G</div><div class="a" style="left:1206px;top:234px;width:1px;height:16px;background:#c6c6c6;"></div><div class="t" style="left:736.0px;width:800px;text-align:center;top:234px;font-size:13px;line-height:15px;font-weight:normal;font-style:normal;color:#262626;font-family:'Liberation Sans',sans-serif;">H</div><div class="a" style="left:1263px;top:234px;width:1px;height:16px;background:#c6c6c6;"></div><div class="t" style="left:835.0px;width:800px;text-align:center;top:234px;font-size:13px;line-height:15px;font-weight:normal;font-style:normal;color:#262626;font-family:'Liberation Sans',sans-serif;">I</div><div class="a" style="left:1320px;top:234px;width:1px;height:16px;background:#c6c6c6;"></div><div class="t" style="left:892.0px;width:800px;text-align:center;top:234px;font-size:13px;line-height:15px;font-weight:normal;font-style:normal;color:#262626;font-family:'Liberation Sans',sans-serif;">J</div><div class="a" style="left:1373px;top:234px;width:1px;height:16px;background:#c6c6c6;"></div><div class="t" style="left:947.0px;width:800px;text-align:center;top:234px;font-size:13px;line-height:15px;font-weight:normal;font-style:normal;color:#262626;font-family:'Liberation Sans',sans-serif;">K</div><div class="a" style="left:1430px;top:234px;width:1px;height:16px;background:#c6c6c6;"></div><div class="t" style="left:1002.0px;width:800px;text-align:center;top:234px;font-size:13px;line-height:15px;font-weight:normal;font-style:normal;color:#262626;font-family:'Liberation Sans',sans-serif;">L</div><div class="t" style="left:1104px;width:800px;text-align:center;top:234px;font-size:13px;line-height:15px;font-weight:normal;font-style:normal;color:#262626;font-family:'Liberation Sans',sans-serif;">M</div><div class="a" style="left:0px;top:282px;width:21px;height:1px;background:#c6c6c6;"></div><div class="t" style="left:5px;top:268px;font-size:12px;line-height:14px;font-weight:normal;font-style:normal;color:#262626;font-family:'Liberation Sans',sans-serif;letter-spacing:-0.5px">1</div><div class="a" style="left:0px;top:307px;width:21px;height:1px;background:#c6c6c6;"></div><div class="t" style="left:5px;top:293px;font-size:12px;line-height:14px;font-weight:normal;font-style:normal;color:#262626;font-family:'Liberation Sans',sans-serif;letter-spacing:-0.5px">2</div><div class="a" style="left:0px;top:332px;width:21px;height:1px;background:#c6c6c6;"></div><div class="t" style="left:5px;top:318px;font-size:12px;line-height:14px;font-weight:normal;font-style:normal;color:#262626;font-family:'Liberation Sans',sans-serif;letter-spacing:-0.5px">3</div><div class="a" style="left:0px;top:375px;width:21px;height:1px;background:#c6c6c6;"></div><div class="t" style="left:5px;top:361px;font-size:12px;line-height:14px;font-weight:normal;font-style:normal;color:#262626;font-family:'Liberation Sans',sans-serif;letter-spacing:-0.5px">4</div><div class="a" style="left:0px;top:400px;width:21px;height:1px;background:#c6c6c6;"></div><div class="t" style="left:5px;top:386px;font-size:12px;line-height:14px;font-weight:normal;font-style:normal;color:#262626;font-family:'Liberation Sans',sans-serif;letter-spacing:-0.5px">5</div><div class="a" style="left:0px;top:420px;width:21px;height:1px;background:#c6c6c6;"></div><div class="t" style="left:5px;top:406px;font-size:12px;line-height:14px;font-weight:normal;font-style:normal;color:#262626;font-family:'Liberation Sans',sans-serif;letter-spacing:-0.5px">6</div><div class="a" style="left:0px;top:440px;width:21px;height:1px;background:#c6c6c6;"></div><div class="t" style="left:5px;top:426px;font-size:12px;line-height:14px;font-weight:normal;font-style:normal;color:#262626;font-family:'Liberation Sans',sans-serif;letter-spacing:-0.5px">7</div><div class="a" style="left:0px;top:461px;width:21px;height:1px;background:#c6c6c6;"></div><div class="t" style="left:5px;top:447px;font-size:12px;line-height:14px;font-weight:normal;font-style:normal;color:#262626;font-family:'Liberation Sans',sans-serif;letter-spacing:-0.5px">8</div><div class="a" style="left:0px;top:504px;width:21px;height:1px;background:#c6c6c6;"></div><div class="t" style="left:5px;top:490px;font-size:12px;line-height:14px;font-weight:normal;font-style:normal;color:#262626;font-family:'Liberation Sans',sans-serif;letter-spacing:-0.5px">9</div><div class="a" style="left:0px;top:524px;width:21px;height:1px;background:#c6c6c6;"></div><div class="t" style="left:2.5px;top:510px;font-size:12px;line-height:14px;font-weight:normal;font-style:normal;color:#262626;font-family:'Liberation Sans',sans-serif;letter-spacing:-0.5px">10</div><div class="a" style="left:0px;top:544px;width:21px;height:1px;background:#c6c6c6;"></div><div class="t" style="left:2.5px;top:530px;font-size:12px;line-height:14px;font-weight:normal;font-style:normal;color:#262626;font-family:'Liberation Sans',sans-serif;letter-spacing:-0.5px">11</div><div class="a" style="left:0px;top:564px;width:21px;height:1px;background:#c6c6c6;"></div><div class="t" style="left:2.5px;top:550px;font-size:12px;line-height:14px;font-weight:normal;font-style:normal;color:#262626;font-family:'Liberation Sans',sans-serif;letter-spacing:-0.5px">12</div><div class="a" style="left:0px;top:584px;width:21px;height:1px;background:#c6c6c6;"></div><div class="t" style="left:2.5px;top:570px;font-size:12px;line-height:14px;font-weight:normal;font-style:normal;color:#262626;font-family:'Liberation Sans',sans-serif;letter-spacing:-0.5px">13</div><div class="a" style="left:0px;top:604px;width:21px;height:1px;background:#c6c6c6;"></div><div class="t" style="left:2.5px;top:590px;font-size:12px;line-height:14px;font-weight:normal;font-style:normal;color:#262626;font-family:'Liberation Sans',sans-serif;letter-spacing:-0.5px">14</div><div class="a" style="left:0px;top:624px;width:21px;height:1px;background:#c6c6c6;"></div><div class="t" style="left:2.5px;top:610px;font-size:12px;line-height:14px;font-weight:normal;font-style:normal;color:#262626;font-family:'Liberation Sans',sans-serif;letter-spacing:-0.5px">15</div><div class="a" style="left:0px;top:644px;width:21px;height:1px;background:#c6c6c6;"></div><div class="t" style="left:2.5px;top:630px;font-size:12px;line-height:14px;font-weight:normal;font-style:normal;color:#262626;font-family:'Liberation Sans',sans-serif;letter-spacing:-0.5px">16</div><div class="a" style="left:0px;top:664px;width:21px;height:1px;background:#c6c6c6;"></div><div class="t" style="left:2.5px;top:650px;font-size:12px;line-height:14px;font-weight:normal;font-style:normal;color:#262626;font-family:'Liberation Sans',sans-serif;letter-spacing:-0.5px">17</div><div class="a" style="left:0px;top:684px;width:21px;height:1px;background:#c6c6c6;"></div><div class="t" style="left:2.5px;top:670px;font-size:12px;line-height:14px;font-weight:normal;font-style:normal;color:#262626;font-family:'Liberation Sans',sans-serif;letter-spacing:-0.5px">18</div><div class="a" style="left:0px;top:704px;width:21px;height:1px;background:#c6c6c6;"></div><div class="t" style="left:2.5px;top:690px;font-size:12px;line-height:14px;font-weight:normal;font-style:normal;color:#262626;font-family:'Liberation Sans',sans-serif;letter-spacing:-0.5px">19</div><div class="a" style="left:0px;top:724px;width:21px;height:1px;background:#c6c6c6;"></div><div class="t" style="left:2.5px;top:710px;font-size:12px;line-height:14px;font-weight:normal;font-style:normal;color:#262626;font-family:'Liberation Sans',sans-serif;letter-spacing:-0.5px">20</div><div class="a" style="left:0px;top:744px;width:21px;height:1px;background:#c6c6c6;"></div><div class="t" style="left:2.5px;top:730px;font-size:12px;line-height:14px;font-weight:normal;font-style:normal;color:#262626;font-family:'Liberation Sans',sans-serif;letter-spacing:-0.5px">21</div><div class="a" style="left:0px;top:764px;width:21px;height:1px;background:#c6c6c6;"></div><div class="t" style="left:2.5px;top:750px;font-size:12px;line-height:14px;font-weight:normal;font-style:normal;color:#262626;font-family:'Liberation Sans',sans-serif;letter-spacing:-0.5px">22</div><div class="a" style="left:0px;top:805px;width:21px;height:1px;background:#c6c6c6;"></div><div class="t" style="left:2.5px;top:791px;font-size:12px;line-height:14px;font-weight:normal;font-style:normal;color:#262626;font-family:'Liberation Sans',sans-serif;letter-spacing:-0.5px">23</div><div class="a" style="left:0px;top:825px;width:21px;height:1px;background:#c6c6c6;"></div><div class="t" style="left:2.5px;top:811px;font-size:12px;line-height:14px;font-weight:normal;font-style:normal;color:#262626;font-family:'Liberation Sans',sans-serif;letter-spacing:-0.5px">24</div><div class="a" style="left:0px;top:845px;width:21px;height:1px;background:#c6c6c6;"></div><div class="t" style="left:2.5px;top:831px;font-size:12px;line-height:14px;font-weight:normal;font-style:normal;color:#262626;font-family:'Liberation Sans',sans-serif;letter-spacing:-0.5px">25</div><div class="a" style="left:0px;top:865px;width:21px;height:1px;background:#c6c6c6;"></div><div class="t" style="left:2.5px;top:851px;font-size:12px;line-height:14px;font-weight:normal;font-style:normal;color:#262626;font-family:'Liberation Sans',sans-serif;letter-spacing:-0.5px">26</div><div class="a" style="left:0px;top:885px;width:21px;height:1px;background:#c6c6c6;"></div><div class="t" style="left:2.5px;top:871px;font-size:12px;line-height:14px;font-weight:normal;font-style:normal;color:#262626;font-family:'Liberation Sans',sans-serif;letter-spacing:-0.5px">27</div><div class="a" style="left:0px;top:886px;width:21px;height:19px;background:#d2d2d2;"></div><div class="a" style="left:20px;top:885px;width:2px;height:21px;background:#217346;"></div><div class="a" style="left:0px;top:905px;width:21px;height:1px;background:#c6c6c6;"></div><div class="t" style="left:2.5px;top:891px;font-size:12px;line-height:14px;font-weight:normal;font-style:normal;color:#217346;font-family:'Liberation Sans',sans-serif;letter-spacing:-0.5px">28</div><div class="a" style="left:0px;top:925px;width:21px;height:1px;background:#c6c6c6;"></div><div class="t" style="left:2.5px;top:911px;font-size:12px;line-height:14px;font-weight:normal;font-style:normal;color:#262626;font-family:'Liberation Sans',sans-serif;letter-spacing:-0.5px">29</div><div class="a" style="left:0px;top:947px;width:21px;height:1px;background:#c6c6c6;"></div><div class="t" style="left:2.5px;top:933px;font-size:12px;line-height:14px;font-weight:normal;font-style:normal;color:#262626;font-family:'Liberation Sans',sans-serif;letter-spacing:-0.5px">30</div>
</body></html>
